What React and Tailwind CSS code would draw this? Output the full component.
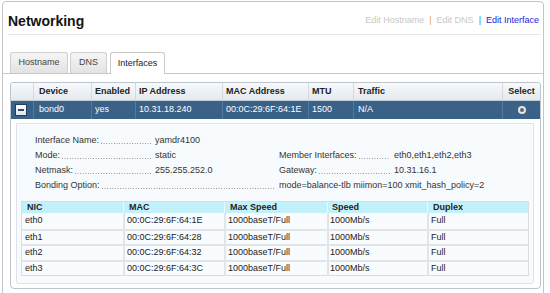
import React from "react";

const mainCols = "grid grid-cols-[22px_58px_44px_87px_86px_45px_149px_38px]";
const nicCols = "grid grid-cols-[101px_101px_103px_100px_1fr]";

function Dots() {
  return (
    <span className="flex-1 min-w-0 self-end mb-[4px] ml-[2px] h-[1px] bg-[linear-gradient(to_right,#8a8a8a_1px,transparent_1px)] bg-[length:2.6px_1px] bg-repeat-x" />
  );
}

function Pair({ label, value, width }) {
  return (
    <div className="flex items-stretch h-[15px]">
      <div className={`flex ${width} pr-[4px]`}>
        <span className="whitespace-nowrap">{label}</span>
        <Dots />
      </div>
      <span className="whitespace-nowrap">{value}</span>
    </div>
  );
}

const nics = [
  ["eth0", "00:0C:29:6F:64:1E", "h-[16px]"],
  ["eth1", "00:0C:29:6F:64:28", "h-[15px]"],
  ["eth2", "00:0C:29:6F:64:32", "h-[16px]"],
  ["eth3", "00:0C:29:6F:64:3C", "h-[15px]"],
];

export default function App() {
  return (
    <div className="w-[550px] h-[293px] overflow-hidden bg-white font-['Liberation_Sans',Arial,sans-serif] text-[#333]">
      <div className="ml-[2px] mt-[1px] w-[542px] h-[320px] border border-[#c4c4c4] rounded-t-[4px]">
        {/* header */}
        <div className="ml-[5px] mr-[2px] h-[33px] border-b border-[#e6e6e6] flex items-start justify-between">
          <h1 className="mt-[11px] text-[14px] leading-[16px] font-bold text-[#141414]">Networking</h1>
          <div className="mt-[12px] mr-[2px] text-[9px] leading-[12px] flex items-center whitespace-nowrap">
            <span className="text-[#c8c8c8]">Edit Hostname</span>
            <span className="mx-[5px] text-[#e8a23a]">|</span>
            <span className="text-[#c8c8c8]">Edit DNS</span>
            <span className="mx-[5px] text-[#1d86d0]">|</span>
            <span className="text-[#2323d8]">Edit Interface</span>
          </div>
        </div>

        {/* tabs */}
        <div className="mt-[17px] h-[22px] pl-[7px] flex items-end border-b border-[#c8c8c8] text-[9px] text-[#444]">
          <div className="w-[58px] h-[21px] mr-[2px] border border-b-0 border-[#cfcfcf] rounded-t-[3px] bg-linear-to-b from-[#f5f5f5] to-[#e3e3e3] flex items-center justify-center">
            Hostname
          </div>
          <div className="w-[37px] h-[21px] mr-[3px] border border-b-0 border-[#cfcfcf] rounded-t-[3px] bg-linear-to-b from-[#f5f5f5] to-[#e3e3e3] flex items-center justify-center">
            DNS
          </div>
          <div className="w-[55px] h-[22px] -mb-px border border-b-0 border-[#c8c8c8] rounded-t-[3px] bg-white flex items-center justify-center text-[#222]">
            Interfaces
          </div>
        </div>

        {/* table */}
        <div className="mt-[8px] ml-[7px] w-[531px] h-[207px] border border-[#bcc5ce] rounded-t-[3px] rounded-b-[4px] text-[9px]">
          <div className={`${mainCols} h-[18px] border-b border-[#c3ccd4] rounded-t-[3px] bg-linear-to-b from-[#f8fafc] to-[#e3e9ee] font-bold text-[#222]`}>
            <div />
            <div className="border-l border-[#d3dae1] pl-[5px] flex items-center">Device</div>
            <div className="border-l border-[#d3dae1] pl-[3px] flex items-center">Enabled</div>
            <div className="border-l border-[#d3dae1] pl-[3px] flex items-center">IP Address</div>
            <div className="border-l border-[#d3dae1] pl-[3px] flex items-center">MAC Address</div>
            <div className="border-l border-[#d3dae1] pl-[3px] flex items-center">MTU</div>
            <div className="border-l border-[#d3dae1] pl-[4px] flex items-center">Traffic</div>
            <div className="border-l border-[#d3dae1] flex items-center justify-center">Select</div>
          </div>
          <div className={`${mainCols} h-[18px] bg-[#3a6188] text-white`}>
            <div className="flex items-center pl-[4px]">
              <div className="w-[12px] h-[12px] border border-[#1e3f62] bg-linear-to-b from-[#ffffff] to-[#dfe6ee] flex items-center justify-center">
                <div className="w-[6px] h-[2px] bg-[#2a4c70]" />
              </div>
            </div>
            <div className="border-l border-[#56789b] pl-[5px] flex items-center">bond0</div>
            <div className="border-l border-[#56789b] pl-[3px] flex items-center">yes</div>
            <div className="border-l border-[#56789b] pl-[3px] flex items-center">10.31.18.240</div>
            <div className="border-l border-[#56789b] pl-[3px] flex items-center">00:0C:29:6F:64:1E</div>
            <div className="border-l border-[#56789b] pl-[3px] flex items-center">1500</div>
            <div className="border-l border-[#56789b] pl-[4px] flex items-center">N/A</div>
            <div className="border-l border-[#56789b] flex items-center justify-center">
              <div className="w-[8px] h-[8px] rounded-full bg-[#e6e6e6] flex items-center justify-center">
                <div className="w-[4px] h-[4px] rounded-full bg-[#666]" />
              </div>
            </div>
          </div>

          {/* detail */}
          <div className="mt-[4px] ml-[5px] w-[518px] h-[161px] border border-[#dde3e8] rounded-b-[3px] bg-[#f8fbfd]">
            <div className="pt-[9px] pl-[18px] leading-[15px]">
              <div className="grid grid-cols-[244px_1fr] h-[15px]">
                <Pair label="Interface Name:" value="yamdr4100" width="w-[120px]" />
                <div />
              </div>
              <div className="grid grid-cols-[244px_1fr] h-[15px]">
                <Pair label="Mode:" value="static" width="w-[120px]" />
                <Pair label="Member Interfaces:" value="eth0,eth1,eth2,eth3" width="w-[115px]" />
              </div>
              <div className="grid grid-cols-[244px_1fr] h-[15px]">
                <Pair label="Netmask:" value="255.255.252.0" width="w-[120px]" />
                <Pair label="Gateway:" value="10.31.16.1" width="w-[115px]" />
              </div>
              <div className="grid grid-cols-[244px_1fr] h-[15px]">
                <div className="flex pr-[4px] h-[15px]">
                  <span className="whitespace-nowrap">Bonding Option:</span>
                  <Dots />
                </div>
                <span className="whitespace-nowrap">mode=balance-tlb miimon=100 xmit_hash_policy=2</span>
              </div>
            </div>

            <div className="mt-[8px] mx-[4px] border border-[#d8dde0] bg-[#f9fcfe] text-[#222]">
              <div className={`${nicCols} h-[11px] bg-[#c3f1fb] font-bold leading-[11px]`}>
                <div className="pl-[5px]">NIC</div>
                <div className="pl-[5px] border-l border-[#e9fbff]">MAC</div>
                <div className="pl-[5px] border-l border-[#e9fbff]">Max Speed</div>
                <div className="pl-[4px] border-l border-[#e9fbff]">Speed</div>
                <div className="pl-[5px] border-l border-[#e9fbff]">Duplex</div>
              </div>
              {nics.map(([n, mac, h], i) => (
                <div key={n} className={`${nicCols} ${h} ${i > 0 ? "border-t-2 border-[#e1e5e8]" : ""}`}>
                  <div className="pl-[3px] flex items-center">{n}</div>
                  <div className="pl-[2px] border-l-2 border-[#e1e5e8] flex items-center">{mac}</div>
                  <div className="pl-[2px] border-l-2 border-[#e1e5e8] flex items-center">1000baseT/Full</div>
                  <div className="pl-[1px] border-l-2 border-[#e1e5e8] flex items-center">1000Mb/s</div>
                  <div className="pl-[2px] border-l-2 border-[#e1e5e8] flex items-center">Full</div>
                </div>
              ))}
            </div>
          </div>
        </div>
      </div>
    </div>
  );
}
